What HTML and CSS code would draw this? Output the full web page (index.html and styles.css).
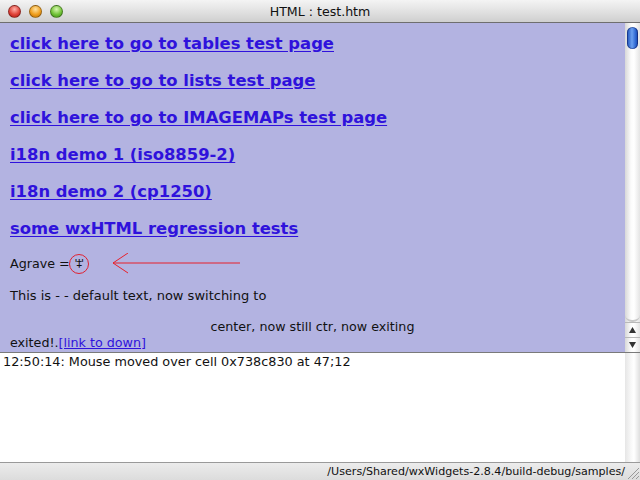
FILE: index.html
```html
<!DOCTYPE html>
<html>
<head>
<meta charset="utf-8">
<link rel="stylesheet" href="styles.css">
</head>
<body>
<div class="window">
  <div class="titlebar">
    <div class="lights">
      <span class="light red"></span>
      <span class="light yellow"></span>
      <span class="light green"></span>
    </div>
    <div class="title">HTML : test.htm</div>
    <div></div>
  </div>
  <div class="htmlpane">
    <div class="content">
      <div class="links">
        <a class="biglink">click here to go to tables test page</a>
        <a class="biglink">click here to go to lists test page</a>
        <a class="biglink">click here to go to IMAGEMAPs test page</a>
        <a class="biglink">i18n demo 1 (iso8859-2)</a>
        <a class="biglink">i18n demo 2 (cp1250)</a>
        <a class="biglink">some wxHTML regression tests</a>
      </div>
      <div class="line agrave">
        <span>Agrave =</span><span class="circled">'‡'</span>
        <svg class="arrow" width="130" height="22" viewBox="0 0 130 22">
          <line x1="2" y1="10" x2="129" y2="10" stroke="#e8202a" stroke-width="1.2"/>
          <line x1="2" y1="10" x2="17" y2="0" stroke="#e8202a" stroke-width="1"/>
          <line x1="2" y1="10" x2="17" y2="20" stroke="#e8202a" stroke-width="1"/>
        </svg>
      </div>
      <div class="line para">This is - - default text, now switching to</div>
      <div class="line center">center, now still ctr, now exiting</div>
      <div class="line">exited!.<a class="smalllink">[link to down]</a></div>
    </div>
    <div class="vscroll">
      <div class="thumb"></div>
      <div class="track"></div>
      <div class="btn up"><svg width="15" height="14" viewBox="0 0 15 14"><polygon points="7.5,4 4,10 11,10" fill="#333"/></svg></div>
      <div class="btn down"><svg width="15" height="14" viewBox="0 0 15 14"><polygon points="4,4 11,4 7.5,10" fill="#333"/></svg></div>
    </div>
  </div>
  <div class="logpane">
    <div class="logtext">12:50:14: Mouse moved over cell 0x738c830 at 47;12</div>
    <div class="logscroll"></div>
  </div>
  <div class="statusbar">
    <span class="path">/Users/Shared/wxWidgets-2.8.4/build-debug/samples/</span>
    <svg class="grip" width="15" height="17" viewBox="0 0 15 17">
      <line x1="3" y1="16" x2="14" y2="5" stroke="#999" stroke-width="1"/>
      <line x1="7" y1="16" x2="14" y2="9" stroke="#999" stroke-width="1"/>
      <line x1="11" y1="16" x2="14" y2="13" stroke="#999" stroke-width="1"/>
    </svg>
  </div>
</div>
</body>
</html>
```

FILE: styles.css
```css
html, body {
  margin: 0;
  padding: 0;
  width: 640px;
  height: 480px;
  overflow: hidden;
}
.window {
  width: 640px;
  height: 480px;
  display: flex;
  flex-direction: column;
  font-family: "DejaVu Sans", "Liberation Sans", sans-serif;
  background: #fff;
}
.titlebar {
  height: 22px;
  border-bottom: 1px solid #6e6e6e;
  background: linear-gradient(#f4f4f4, #e2e2e2 50%, #cfcfcf);
  display: grid;
  grid-template-columns: 1fr auto 1fr;
  align-items: center;
}
.lights {
  display: flex;
  gap: 8px;
  padding-left: 8px;
}
.light {
  width: 13px;
  height: 13px;
  border-radius: 50%;
  box-sizing: border-box;
  border: 1px solid rgba(0,0,0,0.35);
}
.red { background: radial-gradient(circle at 50% 30%, #ffb0a8, #e0443a 55%, #a8140e); }
.yellow { background: radial-gradient(circle at 50% 30%, #ffe2a0, #f0a020 55%, #b86a00); }
.green { background: radial-gradient(circle at 50% 30%, #d8f8b0, #74c43a 55%, #3a8a10); }
.title {
  font-family: "DejaVu Sans", sans-serif;
  font-size: 12.6px;
  color: #111;
}
.htmlpane {
  height: 329px;
  border-bottom: 1px solid #7a7a7a;
  background: #b3b3e1;
  display: flex;
  overflow: hidden;
}
.content {
  flex: 1;
  padding: 2px 0 0 10px;
  color: #111;
  font-size: 12.7px;
}
.links {
  display: flex;
  flex-direction: column;
  align-items: flex-start;
}
.biglink {
  font-weight: bold;
  font-size: 16.4px;
  line-height: 37px;
  color: #2f12dc;
  text-decoration: underline;
  text-underline-offset: 2px;
}
.line {
  line-height: 16px;
  height: 16px;
  white-space: nowrap;
}
.agrave {
  margin-top: 9px;
  display: flex;
  align-items: center;
}
.circled {
  display: inline-flex;
  align-items: center;
  justify-content: center;
  width: 20px;
  height: 20px;
  margin-left: -1px;
  border: 1px solid #e02030;
  border-radius: 50%;
  box-sizing: border-box;
  font-size: 11px;
  letter-spacing: -1px;
}
.arrow {
  margin-left: 22px;
}
.para {
  margin-top: 16px;
  font-size: 13px;
}
.center {
  margin-top: 15px;
  text-align: center;
  padding-right: 10px;
}
.smalllink {
  color: #2f12dc;
  text-decoration: underline;
}
.vscroll {
  width: 15px;
  display: flex;
  flex-direction: column;
  background: linear-gradient(90deg, #d8d8d8, #fbfbfb 40%, #ffffff 60%, #e4e4e4);
}
.thumb {
  margin: 4px 2px 0 2px;
  height: 22px;
  border-radius: 6px;
  background: linear-gradient(90deg, #1c50b8, #6aa0f0 45%, #2a64d0 80%, #1a44a0);
  box-shadow: inset 0 0 0 1px rgba(0,0,60,0.35);
}
.track {
  flex: 1;
  border-bottom-left-radius: 7px;
  border-bottom-right-radius: 7px;
  border-bottom: 2px solid #c8c8c8;
}
.btn {
  height: 14px;
  border-top: 1px solid #b8b8b8;
  display: flex;
}
.logpane {
  height: 109px;
  border-bottom: 1px solid #9a9a9a;
  display: flex;
  background: #fff;
}
.logtext {
  flex: 1;
  padding: 1px 0 0 3px;
  font-size: 12.8px;
  line-height: 16px;
  color: #111;
  white-space: nowrap;
}
.logscroll {
  width: 15px;
  background: linear-gradient(90deg, #e6e6e6, #f8f8f8 40%, #ffffff 60%, #dedede);
}
.statusbar {
  flex: 1;
  background: linear-gradient(#ececec, #dcdcdc);
  display: flex;
  justify-content: flex-end;
  align-items: center;
}
.path {
  font-size: 11.1px;
  color: #111;
  white-space: nowrap;
}
.grip {
  flex: none;
}
```
